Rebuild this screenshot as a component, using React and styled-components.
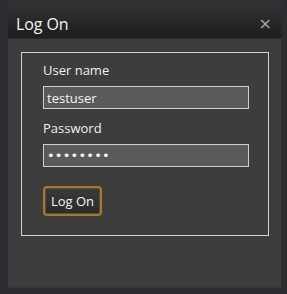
import React from 'react';
import styled, { createGlobalStyle } from 'styled-components';

const Global = createGlobalStyle`
  html, body {
    margin: 0;
    background: #2c2d31;
  }
  body {
    font-family: "Open Sans", "Noto Sans", sans-serif;
  }
`;

// fenetre du dialogue
const Window = styled.div`
  margin-left: 8px;
  width: 273px;
  height: 288px;
  box-sizing: border-box;
  background: #3d3d3d;
  border-top: 10px solid #303133;
  display: flex;
  flex-direction: column;
  border-bottom: 1px solid #353535;
`;

const Header = styled.div`
  height: 28px;
  display: flex;
  align-items: center;
  justify-content: space-between;
  padding: 0 9px 0 8px;
  background: linear-gradient(#2f2f2f, #1c1c1c);
  border-bottom: 1px solid #2a2a2a;
`;

const Title = styled.h1`
  margin: 0;
  font-size: 16px;
  font-weight: 400;
  color: #f2f2f2;
  letter-spacing: -0.1px;
`;

const Close = styled.span`
  font-size: 16px;
  line-height: 1;
  color: #a8a8a8;
  font-family: "DejaVu Sans", sans-serif;
`;

const Body = styled.div`
  padding: 13px 12px 0 13px;
`;

const Fieldset = styled.div`
  border: 1px solid #d4d4d4;
  height: 184px;
  box-sizing: border-box;
  padding: 9px 20px 0 21px;
  display: flex;
  flex-direction: column;
`;

const Label = styled.label`
  font-size: 13px;
  color: #f0f0f0;
  line-height: 17px;
  margin-bottom: 7px;
`;

const Input = styled.input`
  width: 206px;
  height: 23px;
  box-sizing: border-box;
  border: 1px solid #cfcfcf;
  background: #5a5a5a;
  color: #f4f4f4;
  font-family: ${p => (p.type === 'password' ? '"DejaVu Sans", sans-serif' : 'inherit')};
  font-size: ${p => (p.type === 'password' ? '13px' : '13px')};
  letter-spacing: ${p => (p.type === 'password' ? '0.2px' : '0')};
  padding: 0 3px;
  margin-bottom: ${p => p.$gap || 0}px;
  outline: none;
`;

const Button = styled.button`
  align-self: flex-start;
  width: 59px;
  height: 30px;
  border: 2px solid #a47a22;
  border-radius: 4px;
  background: linear-gradient(#3a3a3a, #2a2a2a);
  box-shadow: inset 0 0 0 1px #505050;
  color: #f4f4f4;
  font-family: inherit;
  font-size: 13px;
  padding: 0;
`;

export default function App() {
  return (
    <>
      <Global />
      <Window>
        <Header>
          <Title>Log On</Title>
          <Close>×</Close>
        </Header>
        <Body>
          <Fieldset>
            <Label>User name</Label>
            <Input defaultValue="testuser" $gap={11} />
            <Label>Password</Label>
            <Input type="password" defaultValue="password" $gap={19} />
            <Button>Log On</Button>
          </Fieldset>
        </Body>
      </Window>
    </>
  );
}
